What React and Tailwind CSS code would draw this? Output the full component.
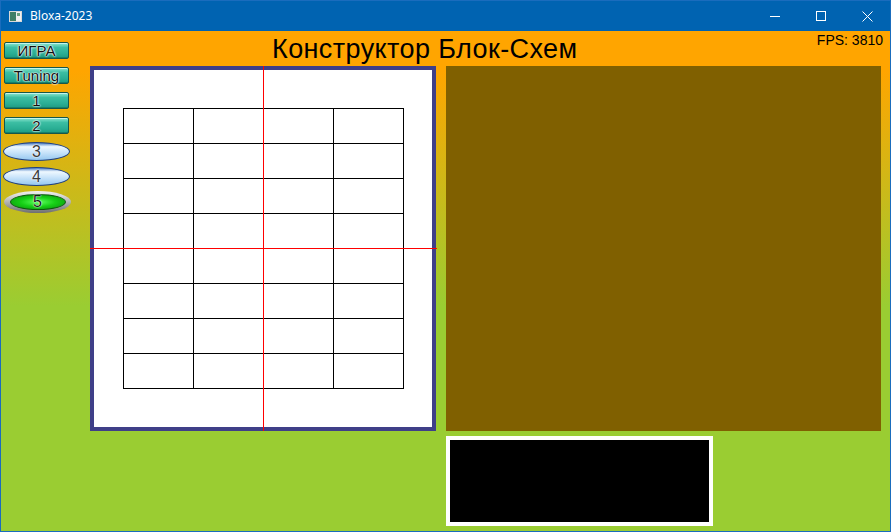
import React from 'react';

const ROWS = 8;
const COLS = 4;

const TealButton = ({ label, className = '' }) => (
  <div
    className={`w-[65px] h-[17px] flex items-center justify-center rounded-[2px] border border-[#17574a] bg-[linear-gradient(to_bottom,#8de6d0_0%,#3cbea3_30%,#2aae94_70%,#1f9a82_100%)] shadow-[inset_0_1px_0_#c4f5ea,inset_0_-1px_0_#15806b] ${className}`}
  >
    <span className="text-[15px] leading-none text-[#111] [text-shadow:0_0_1px_#fff,0_0_2px_#fff,0_0_2px_#fff]">
      {label}
    </span>
  </div>
);

const BlueButton = ({ label, className = '' }) => (
  <div
    className={`w-[67px] h-[19px] flex items-center justify-center rounded-[50%] border border-[#1d3f86] bg-[linear-gradient(to_bottom,#4d7fc4_0%,#eef8ff_22%,#cfe7fb_50%,#96c8f0_100%)] ${className}`}
  >
    <span className="text-[16px] leading-none text-[#3a3a3a] [text-shadow:0_0_1px_#fff,0_0_2px_#fff]">{label}</span>
  </div>
);

const GreenButton = ({ label, className = '' }) => (
  <div
    className={`w-[67px] h-[22px] flex items-center justify-center rounded-[50%] bg-[linear-gradient(to_bottom,#f2f2f2,#b4b4b4_50%,#6f6f6f)] ${className}`}
  >
    <div className="w-[56px] h-[16px] rounded-[50%] flex items-center justify-center border border-[#0b5a0b] bg-[radial-gradient(ellipse_at_center,#5dff5d_0%,#16d016_45%,#0a8a0a_100%)]">
      <span className="text-[16px] leading-none text-[#1a1a1a] [text-shadow:0_0_1px_#fff,0_0_2px_#fff]">{label}</span>
    </div>
  </div>
);

const FlowTable = () => (
  <div className="border-l border-t border-black grid grid-cols-[repeat(4,70px)]">
    {Array.from({ length: ROWS * COLS }).map((_, i) => (
      <div key={i} className="w-[70px] h-[35px] border-r border-b border-black" />
    ))}
  </div>
);

export default function App() {
  return (
    <div className="w-[891px] h-[532px] border border-[#1a6cbd] flex flex-col overflow-hidden font-['Liberation_Sans',Arial,sans-serif]">
      {/* Title bar */}
      <div className="h-[30px] bg-[#0063b1] flex items-center text-white">
        <div className="ml-[8px] w-[13px] h-[11px] border border-[#d8d8d8] bg-[#f0f0f0] flex">
          <div className="w-[6px] h-full bg-[#3f7f66]" />
          <div className="ml-[1px] mt-[1px] w-[3px] h-[3px] bg-[#6aa080]" />
        </div>
        <span className="ml-[8px] text-[12px] font-['Noto_Sans',sans-serif]">Bloxa-2023</span>
        <div className="ml-auto flex h-full">
          <div className="w-[46px] h-full flex items-center justify-center">
            <svg width="10" height="10" viewBox="0 0 10 10">
              <path d="M0 5.5H10" stroke="#fff" strokeWidth="1" />
            </svg>
          </div>
          <div className="w-[46px] h-full flex items-center justify-center">
            <svg width="10" height="10" viewBox="0 0 10 10">
              <rect x="0.5" y="0.5" width="9" height="9" fill="none" stroke="#fff" strokeWidth="1" />
            </svg>
          </div>
          <div className="w-[46px] h-full flex items-center justify-center">
            <svg width="11" height="11" viewBox="0 0 11 11">
              <path d="M0.5 0.5L10.5 10.5M10.5 0.5L0.5 10.5" stroke="#fff" strokeWidth="1" />
            </svg>
          </div>
        </div>
      </div>

      {/* Client area */}
      <div className="flex-1 flex bg-[linear-gradient(to_bottom,#ffa500_8%,#9acd32_55%)]">
        {/* Left menu */}
        <div className="w-[89px] pt-[11px] pl-[2px] flex flex-col">
          <TealButton label="ИГРА" className="ml-[1px]" />
          <TealButton label="Tuning" className="ml-[1px] mt-[8px]" />
          <TealButton label="1" className="ml-[1px] mt-[8px]" />
          <TealButton label="2" className="ml-[1px] mt-[8px]" />
          <BlueButton label="3" className="mt-[8px]" />
          <BlueButton label="4" className="mt-[6px]" />
          <GreenButton label="5" className="ml-[1px] mt-[5px]" />
        </div>

        {/* Main */}
        <div className="flex-1 flex flex-col">
          <div className="h-[35px] flex items-start">
            <span className="ml-[182px] mt-[3px] text-[27px] leading-[30px] tracking-[0.4px] text-black">Конструктор Блок-Схем</span>
            <span className="ml-auto mr-[7px] mt-[2px] text-[14px] leading-none text-black">FPS: 3810</span>
          </div>

          <div className="flex gap-[10px] items-start">
            <div className="relative w-[346px] h-[365px] border-4 border-[#3f3f88] bg-white flex items-center justify-center">
              <FlowTable />
              <div className="absolute left-[-4px] right-[-5px] top-[178px] h-px bg-[#ff0000]" />
              <div className="absolute top-[-4px] bottom-[-4px] left-[169px] w-px bg-[#ff0000]" />
            </div>

            <div className="flex flex-col">
              <div className="w-[435px] h-[365px] bg-[#806000]" />
              <div className="mt-[5px] w-[267px] h-[90px] border-4 border-white bg-black" />
            </div>
          </div>
        </div>
      </div>
    </div>
  );
}
